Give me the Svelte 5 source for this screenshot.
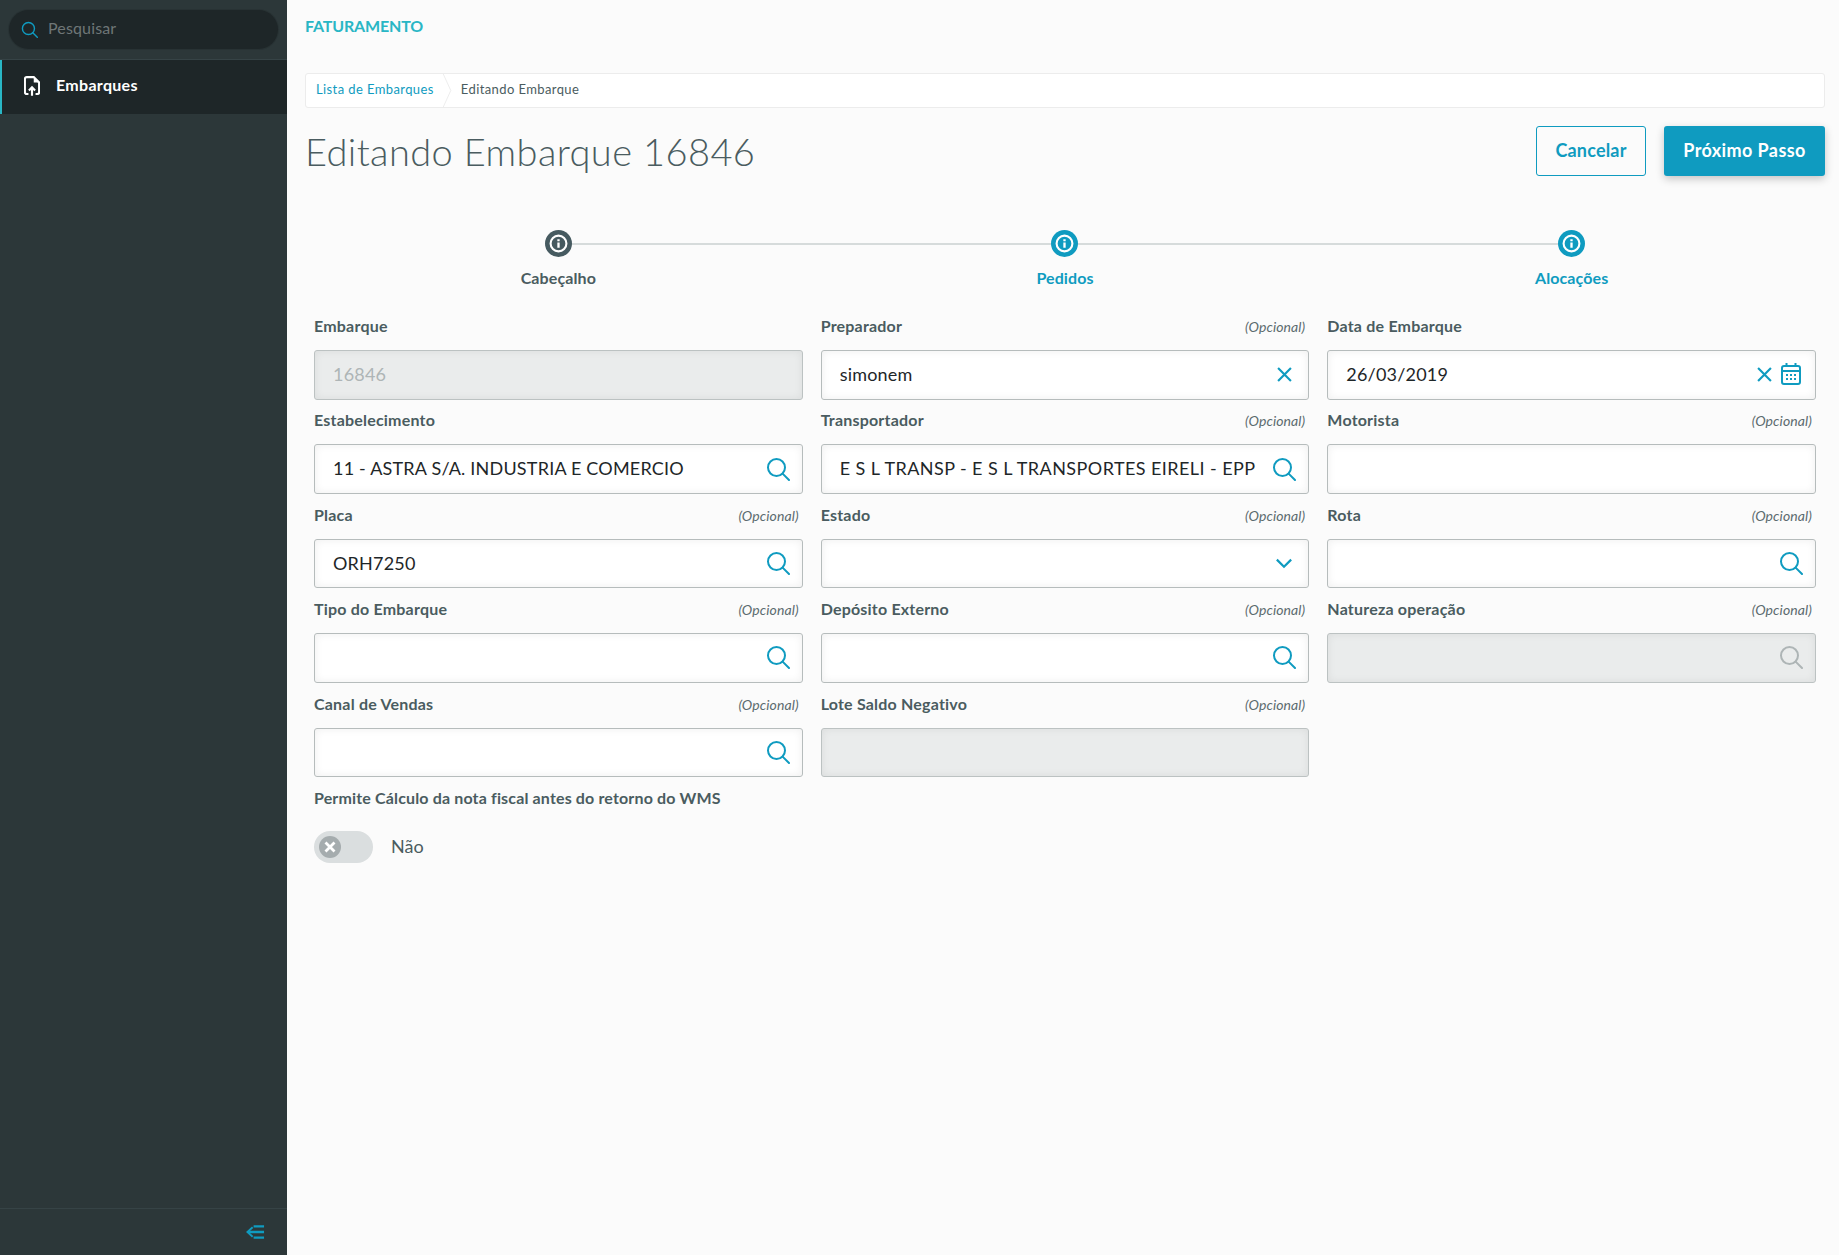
<script>
  const fields = [
    { label: 'Embarque', value: '16846', disabled: true },
    { label: 'Preparador', opt: true, value: 'simonem', icons: ['x'] },
    { label: 'Data de Embarque', value: '26/03/2019', icons: ['x', 'cal'] },
    { label: 'Estabelecimento', value: '11 - ASTRA S/A. INDUSTRIA E COMERCIO', icons: ['search'] },
    { label: 'Transportador', opt: true, value: 'E S L TRANSP - E S L TRANSPORTES EIRELI - EPP', wide: true, icons: ['search'] },
    { label: 'Motorista', opt: true },
    { label: 'Placa', opt: true, value: 'ORH7250', icons: ['search'] },
    { label: 'Estado', opt: true, icons: ['chev'] },
    { label: 'Rota', opt: true, icons: ['search'] },
    { label: 'Tipo do Embarque', opt: true, icons: ['search'] },
    { label: 'Depósito Externo', opt: true, icons: ['search'] },
    { label: 'Natureza operação', opt: true, disabled: true, icons: ['search'] },
    { label: 'Canal de Vendas', opt: true, icons: ['search'] },
    { label: 'Lote Saldo Negativo', opt: true, disabled: true }
  ];
  const steps = [
    { label: 'Cabeçalho', active: true },
    { label: 'Pedidos' },
    { label: 'Alocações' }
  ];
</script>

{#snippet searchIcon(cls)}
  <svg class={cls} viewBox="0 0 24 24" fill="none" stroke="currentColor" stroke-width="2"><circle cx="10.5" cy="10.5" r="8.5"/><path d="M16.6 16.6 23 23" stroke-linecap="round"/></svg>
{/snippet}

<div class="page">
  <aside class="side">
    <div class="searchwrap">
      <div class="search">
        {@render searchIcon('sicon')}
        <span>Pesquisar</span>
      </div>
    </div>
    <div class="menu">
      <svg class="fileicon" viewBox="0 0 18 22" fill="none" stroke="#fff" stroke-width="2.400">
        <path d="M5 20H3a2 2 0 0 1-2-2V3a2 2 0 0 1 2-2h8l6 6v11a2 2 0 0 1-2 2h-2"/>
        <path d="M11 1.500V7h5.500z" fill="#fff" stroke="none"/>
        <path d="M9 22v-9M5.500 16 9 12.500l3.500 3.500"/>
      </svg>
      <span>Embarques</span>
    </div>
    <div class="sidefoot">
      <svg viewBox="0 0 20 14" fill="none" stroke="#0f9bc0" stroke-width="2.400"><path d="M8 1h11M2 7h17M8 13h11"/><path d="M7 2 1.500 7 7 12" stroke-width="2"/></svg>
    </div>
  </aside>

  <main class="main">
    <div class="app">FATURAMENTO</div>
    <nav class="crumb">
      <span class="link">Lista de Embarques</span>
      <svg class="sep" viewBox="0 0 9 35" fill="none" stroke="#ececec"><path d="M0 0 8 17.500 0 35"/></svg>
      <span>Editando Embarque</span>
    </nav>
    <div class="head">
      <h1>Editando Embarque 16846</h1>
      <div class="btns">
        <button class="ghost">Cancelar</button>
        <button class="primary">Próximo Passo</button>
      </div>
    </div>

    <div class="steps">
      {#each steps as s}
        <div class="step" class:active={s.active}>
          <div class="dot">
            <svg viewBox="0 0 18 18" fill="none" stroke="#fff"><circle cx="9" cy="9" r="7.500" stroke-width="2"/><path d="M9 5v1.800M9 8v5" stroke-width="2.200"/></svg>
          </div>
          <div class="slabel">{s.label}</div>
        </div>
      {/each}
    </div>

    <div class="form">
      {#each fields as f}
        <div class="field">
          <div class="lab"><b>{f.label}</b>{#if f.opt}<i>(Opcional)</i>{/if}</div>
          <div class="box" class:dis={f.disabled}>
            <span class="val" class:wide={f.wide}>{f.value ?? ''}</span>
            {#each f.icons ?? [] as ic}
              {#if ic === 'search'}
                {@render searchIcon('ic')}
              {:else if ic === 'x'}
                <svg class="ic x" viewBox="0 0 14 14" fill="none" stroke="currentColor" stroke-width="2"><path d="M1 1l12 12M13 1 1 13"/></svg>
              {:else if ic === 'chev'}
                <svg class="ic chev" viewBox="0 0 16 10" fill="none" stroke="currentColor" stroke-width="2"><path d="M1.500 1.500 8 8l6.500-6.500"/></svg>
              {:else}
                <svg class="ic cal" viewBox="0 0 20 22" fill="none" stroke="currentColor" stroke-width="2">
                  <rect x="1" y="3" width="18" height="18" rx="2"/><path d="M1 8h18M5.500 0v4M14.500 0v4"/>
                  <path d="M5 12h2M9 12h2M13 12h2M5 16h2M9 16h2M13 16h2" stroke-width="1.800"/>
                </svg>
              {/if}
            {/each}
          </div>
        </div>
      {/each}
    </div>

    <div class="sw">
      <div class="swlabel">Permite Cálculo da nota fiscal antes do retorno do WMS</div>
      <div class="swrow">
        <div class="track">
          <div class="knob"><svg viewBox="0 0 12 12" fill="none" stroke="#fff" stroke-width="2.800"><path d="M1.500 1.500l9 9M10.500 1.500l-9 9"/></svg></div>
        </div>
        <span>Não</span>
      </div>
    </div>
  </main>
</div>

<style>
  :global(body) { margin: 0; background: #fbfbfb; }
  .page {
    display: flex; height: 1255px; overflow: hidden;
    font-family: Lato, "Open Sans", sans-serif; color: #4a5c60;
  }
  .side { width: 287px; flex: none; background: #2c3739; display: flex; flex-direction: column; }
  .searchwrap { height: 60px; padding: 10px 9px 0; box-sizing: border-box; border-bottom: 1px solid #364346; }
  .search {
    height: 39px; border-radius: 20px; background: #1e2628; display: flex; align-items: center;
    padding-left: 12px; gap: 10px; color: #6f7677; font-size: 16px; box-shadow: 0 0 0 1px #283234;
  }
  .search span { padding-bottom: 4px; letter-spacing: .15px; }
  .search :global(.sicon) { width: 17px; height: 17px; color: #0f9bc0; }
  .menu {
    height: 54px; background: #1e2628; border-left: 2px solid #29b6c5; display: flex; align-items: center;
    padding-left: 22px; color: #fff; font-weight: 700; font-size: 16px; gap: 16px;
  }
  .menu span { letter-spacing: .3px; padding-bottom: 6px; }
  .fileicon { width: 16px; height: 20px; margin-bottom: 2px; }
  .sidefoot {
    margin-top: auto; height: 46px; border-top: 1px solid #364346; display: flex; align-items: center;
    justify-content: flex-end; padding-right: 22px;
  }
  .sidefoot svg { width: 19px; height: 14px; }
  .main { flex: 1; padding: 0 14px 0 18px; min-width: 0; }
  .app { height: 73px; padding-top: 16px; box-sizing: border-box; font-size: 16px; font-weight: 700; color: #29b6c5; line-height: 19px; letter-spacing: -.15px; }
  .crumb {
    height: 35px; box-sizing: border-box; background: #fff; border: 1px solid #ececec; border-radius: 3px;
    display: flex; align-items: center; padding: 0 0 0 10px; font-size: 13px; color: #4a5c60;
  }
  .crumb .link { color: #0f9bc0; }
  .crumb span { letter-spacing: .4px; padding-bottom: 3px; }
  .sep { width: 9px; height: 33px; margin: 0 9px 0 9px; }
  .head { display: flex; justify-content: space-between; margin-top: 18px; height: 50px; }
  h1 { margin: 0; font-size: 38px; font-weight: 300; line-height: 50px; letter-spacing: .4px; color: #4a5c60; }
  .btns { display: flex; gap: 18px; }
  button {
    height: 50px; border-radius: 3px; font: 700 18px Lato, sans-serif; padding: 0 0 2px;
  }
  .ghost { width: 110px; background: transparent; border: 1px solid #0f9bc0; color: #0f9bc0; letter-spacing: .2px; }
  .primary { width: 161px; background: #0f9bc0; border: 0; color: #fff; box-shadow: 0 3px 8px rgba(0,0,0,.22); letter-spacing: .4px; }
  .steps, .form {
    display: grid; grid-template-columns: repeat(3, 1fr); column-gap: 18px; margin: 0 9px;
  }
  .steps { margin-top: 54px; height: 84px; }
  .step { position: relative; display: flex; flex-direction: column; align-items: center; }
  .step::before {
    content: ''; position: absolute; top: 13px; left: 50%; width: calc(100% + 18px); height: 2px; background: #d6dbdb;
  }
  .step:last-child::before { display: none; }
  .dot {
    width: 27px; height: 27px; border-radius: 50%; background: #0f9bc0; display: flex; align-items: center; justify-content: center;
    position: relative;
  }
  .dot svg { width: 19px; height: 19px; }
  .step.active .dot { background: #465a60; }
  .slabel { margin-top: 11px; font-size: 16px; font-weight: 700; color: #0f9bc0; line-height: 20px; letter-spacing: .1px; }
  .step.active .slabel { color: #4a5c60; }
  .form { grid-auto-rows: 94.4px; }
  .lab { display: flex; justify-content: space-between; align-items: center; height: 23px; padding-right: 4px; font-size: 16px; }
  .lab b { font-weight: 700; letter-spacing: .2px; }
  .lab i { font-size: 14px; font-weight: 400; color: #5b6b6f; letter-spacing: .1px; padding-top: 2px; }
  .box {
    margin-top: 13px; height: 49.5px; box-sizing: border-box; border: 1px solid #b6bcbc; border-radius: 3px; background: #fff;
    box-shadow: inset 0 0 8px rgba(0,0,0,.07); display: flex; align-items: center; padding: 0 12px 0 18px; color: #0f9bc0;
  }
  .box.dis { background: #eaecec; border-color: #bcc2c2; color: #aeb5b6; }
  .val { flex: 1; font-size: 18px; color: #1e2628; white-space: nowrap; overflow: hidden; letter-spacing: .2px; padding-bottom: 2px; }
  .val.wide { letter-spacing: .43px; }
  .box.dis .val { color: #aeb5b6; }
  .box :global(.ic) { width: 24px; height: 24px; flex: none; margin-bottom: 1px; }
  .box .x { width: 15px; height: 15px; margin-right: 4px; }
  .box .x + .cal { margin-left: 5px; }
  .box .chev { width: 18px; height: 11px; margin-right: 3px; }
  .box .cal { width: 20px; height: 22px; margin-right: 2px; }
  .sw { margin: 0 9px 0; }
  .swlabel { font-size: 16px; font-weight: 700; letter-spacing: .15px; line-height: 23px; }
  .swrow { display: flex; align-items: center; gap: 18px; margin-top: 22px; font-size: 18px; }
  .swrow span { padding-bottom: 2px; }
  .track { width: 59px; height: 32px; border-radius: 16px; background: #dadedf; display: flex; align-items: center; padding-left: 5px; box-sizing: border-box; }
  .knob { width: 22px; height: 22px; border-radius: 50%; background: #a5acae; display: flex; align-items: center; justify-content: center; }
  .knob svg { width: 12px; height: 12px; }
</style>
